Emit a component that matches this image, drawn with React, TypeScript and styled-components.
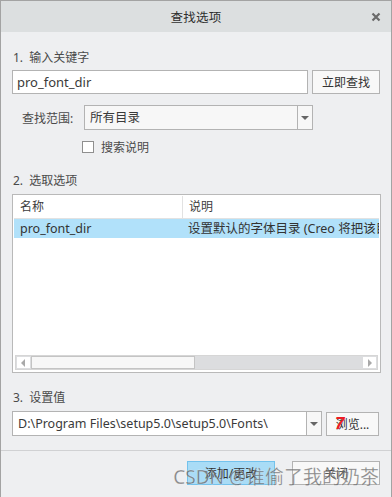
import React from 'react';
import styled, { createGlobalStyle } from 'styled-components';

const GlobalStyle = createGlobalStyle`
  html, body {
    margin: 0;
    padding: 0;
    background: #eeeff1;
  }
  * {
    box-sizing: border-box;
  }
`;

const FONT = `"Segoe UI", "Noto Sans", "Noto Sans CJK SC", sans-serif`;

export default function App() {
  return (
    <>
      <GlobalStyle />
      <Window>
        <TitleBar>
          <Title>查找选项</Title>
          <CloseButton aria-label="关闭">
            <svg width="10" height="10" viewBox="0 0 10 10">
              <path d="M1.5 1.5 L8.5 8.5 M8.5 1.5 L1.5 8.5" stroke="#6a6a6a" strokeWidth="2.2" />
            </svg>
          </CloseButton>
        </TitleBar>

        <Body>
          <SectionLabel $top={18}>1.&nbsp;&nbsp;输入关键字</SectionLabel>
          <Row $top={4}>
            <TextInput $width={296}>pro_font_dir</TextInput>
            <Button $width={68}>立即查找</Button>
          </Row>

          <Row $top={11}>
            <FieldLabel>查找范围:</FieldLabel>
            <Combo $width={229}>
              <ComboText>所有目录</ComboText>
              <ComboArrow>
                <Caret />
              </ComboArrow>
            </Combo>
          </Row>

          <CheckRow>
            <CheckBox />
            <CheckLabel>搜索说明</CheckLabel>
          </CheckRow>

          <SectionLabel $top={19}>2.&nbsp;&nbsp;选取选项</SectionLabel>
          <Table>
            <HeaderRow>
              <HeaderCell $width={168}>名称</HeaderCell>
              <HeaderCell>说明</HeaderCell>
            </HeaderRow>
            <DataRow $selected>
              <DataCell $width={168}>pro_font_dir</DataCell>
              <DataCell>设置默认的字体目录 (Creo 将把该目录作为字体目录)</DataCell>
            </DataRow>
            <TableFill />
            <HScroll>
              <ScrollArrow>
                <svg width="5" height="8" viewBox="0 0 5 8">
                  <path d="M4 0 L0 4 L4 8 Z" fill="#a9a9a9" />
                </svg>
              </ScrollArrow>
              <ScrollTrack>
                <ScrollThumb />
              </ScrollTrack>
              <ScrollArrow>
                <svg width="5" height="8" viewBox="0 0 5 8">
                  <path d="M1 0 L5 4 L1 8 Z" fill="#a9a9a9" />
                </svg>
              </ScrollArrow>
            </HScroll>
          </Table>

          <SectionLabel $top={17}>3.&nbsp;&nbsp;设置值</SectionLabel>
          <Row $top={5}>
            <Combo $width={310} $white>
              <ComboText>D:\Program Files\setup5.0\setup5.0\Fonts\</ComboText>
              <ComboArrow>
                <Caret />
              </ComboArrow>
            </Combo>
            <AnnotatedButton $width={53}>
              浏览...
              <RedMark>7</RedMark>
            </AnnotatedButton>
          </Row>
        </Body>

        <Separator />

        <Footer>
          <Button $width={88} $primary>添加/更改</Button>
          <Button $width={88}>关闭</Button>
          <Watermark>CSDN @谁偷了我的奶茶</Watermark>
        </Footer>
      </Window>
    </>
  );
}

const Window = styled.div`
  position: relative;
  width: 392px;
  height: 497px;
  border: 1px solid #a3a3a3;
  border-bottom: none;
  background: #eeeff1;
  font-family: ${FONT};
  font-size: 12px;
  color: #3c3c3c;
  display: flex;
  flex-direction: column;
  overflow: hidden;
`;

const TitleBar = styled.div`
  position: relative;
  height: 31px;
  flex-shrink: 0;
  background: #dcdfe0;
  display: flex;
  align-items: center;
  justify-content: center;
`;

const Title = styled.div`
  font-size: 12.5px;
  color: #2f2f2f;
  letter-spacing: 0.3px;
`;

const CloseButton = styled.div`
  position: absolute;
  right: 10px;
  top: 11px;
  width: 10px;
  height: 10px;
  display: flex;
`;

const Body = styled.div`
  display: flex;
  flex-direction: column;
  padding: 0 10px 0 11px;
`;

const SectionLabel = styled.div<{ $top: number }>`
  margin-top: ${(p) => p.$top}px;
  height: 16px;
  line-height: 16px;
  padding-left: 1px;
  color: #4a4a4a;
`;

const Row = styled.div<{ $top: number }>`
  margin-top: ${(p) => p.$top}px;
  display: flex;
  align-items: center;
  gap: 4px;
`;

const TextInput = styled.div<{ $width: number }>`
  width: ${(p) => p.$width}px;
  height: 24px;
  background: #ffffff;
  border: 1px solid #b3b3b3;
  padding: 0 4px;
  line-height: 22px;
  font-size: 13px;
  color: #3a3a3a;
`;

const Button = styled.div<{ $width: number; $primary?: boolean }>`
  width: ${(p) => p.$width}px;
  height: 24px;
  border: 1px solid ${(p) => (p.$primary ? '#73c2ec' : '#b3b3b3')};
  background: ${(p) => (p.$primary ? '#a9dcf6' : '#f8f8f8')};
  display: flex;
  align-items: center;
  justify-content: center;
  font-size: 12px;
  color: #333;
`;

const AnnotatedButton = styled(Button)`
  position: relative;
`;

const RedMark = styled.span`
  position: absolute;
  left: 8px;
  top: 1px;
  font-family: "Liberation Sans", sans-serif;
  font-size: 17px;
  font-weight: bold;
  font-style: italic;
  color: #ec1c24;
`;

const FieldLabel = styled.div`
  width: 68px;
  padding-left: 10px;
  color: #4a4a4a;
`;

const Combo = styled.div<{ $width: number; $white?: boolean }>`
  width: ${(p) => p.$width}px;
  height: 25px;
  border: 1px solid #b3b3b3;
  background: ${(p) => (p.$white ? '#ffffff' : '#f7f7f7')};
  display: flex;
  align-items: stretch;
`;

const ComboText = styled.div`
  flex: 1;
  padding: 0 5px;
  line-height: 23px;
  font-size: 12.5px;
  color: #3a3a3a;
  white-space: nowrap;
  overflow: hidden;
`;

const ComboArrow = styled.div`
  width: 15px;
  border-left: 1px solid #b3b3b3;
  background: #f7f7f7;
  display: flex;
  align-items: center;
  justify-content: center;
`;

const Caret = styled.div`
  width: 0;
  height: 0;
  border-left: 4px solid transparent;
  border-right: 4px solid transparent;
  border-top: 4px solid #666;
`;

const CheckRow = styled.div`
  margin-top: 10px;
  margin-left: 70px;
  display: flex;
  align-items: center;
  gap: 7px;
  height: 14px;
`;

const CheckBox = styled.div`
  width: 12px;
  height: 12px;
  background: #ffffff;
  border: 1px solid #8f8f8f;
`;

const CheckLabel = styled.div`
  color: #4a4a4a;
`;

const Table = styled.div`
  margin-top: 5px;
  width: 369px;
  height: 179px;
  border: 1px solid #b9b9b9;
  background: #ffffff;
  display: flex;
  flex-direction: column;
  padding: 1px;
`;

const HeaderRow = styled.div`
  height: 23px;
  display: flex;
  border-bottom: 1px solid #e2e2e2;
  background: #ffffff;
`;

const HeaderCell = styled.div<{ $width?: number }>`
  ${(p) => (p.$width ? `width: ${p.$width}px;` : 'flex: 1;')}
  padding-left: 6px;
  line-height: 22px;
  color: #3c3c3c;
  & + & {
    border-left: 1px solid #e2e2e2;
  }
`;

const DataRow = styled.div<{ $selected?: boolean }>`
  height: 19px;
  display: flex;
  background: ${(p) => (p.$selected ? '#b1e1fa' : 'transparent')};
  overflow: hidden;
`;

const DataCell = styled.div<{ $width?: number }>`
  ${(p) => (p.$width ? `width: ${p.$width}px;` : 'flex: 1;')}
  padding-left: 6px;
  line-height: 19px;
  font-size: 12.5px;
  color: #333;
  white-space: nowrap;
  overflow: hidden;
`;

const TableFill = styled.div`
  flex: 1;
`;

const HScroll = styled.div`
  height: 15px;
  display: flex;
  background: #dcdddf;
  border: 1px solid #d6d6d6;
  margin: 0 1px 1px;
`;

const ScrollArrow = styled.div`
  width: 15px;
  background: #ffffff;
  border: 1px solid #dcdddf;
  display: flex;
  align-items: center;
  justify-content: center;
`;

const ScrollTrack = styled.div`
  flex: 1;
  display: flex;
`;

const ScrollThumb = styled.div`
  width: 164px;
  background: #f7f7f7;
  border: 1px solid #c4c4c4;
`;

const Separator = styled.div`
  margin-top: 14px;
  height: 1px;
  background: #d0d1d3;
`;

const Footer = styled.div`
  position: relative;
  margin-top: 10px;
  display: flex;
  justify-content: flex-end;
  gap: 17px;
  padding-right: 11px;
`;

const Watermark = styled.div`
  position: absolute;
  right: 12px;
  top: 1px;
  font-family: "Noto Sans", "Noto Sans CJK SC", sans-serif;
  font-size: 19px;
  color: rgba(80, 80, 80, 0.68);
  -webkit-text-stroke: 0.4px rgba(255, 255, 255, 0.5);
  white-space: nowrap;
  pointer-events: none;
`;
